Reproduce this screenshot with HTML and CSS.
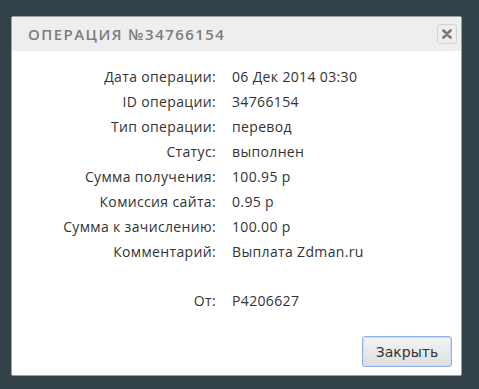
FILE: index.html
```html
<!DOCTYPE html>
<html>
<head>
<meta charset="utf-8">
<link rel="stylesheet" href="styles.css">
</head>
<body>
<div class="dialog">
  <div class="header">
    <span class="title">Операция №34766154</span>
    <button class="close" aria-label="close">
      <svg width="10" height="10" viewBox="0 0 10 10"><path d="M1.5 1.5 L8.5 8.5 M8.5 1.5 L1.5 8.5" stroke="#787878" stroke-width="2.6" stroke-linecap="round"/></svg>
    </button>
  </div>
  <div class="content">
    <div class="info">
      <div class="label">Дата операции:</div><div class="value">06 Дек 2014 03:30</div>
      <div class="label">ID операции:</div><div class="value">34766154</div>
      <div class="label">Тип операции:</div><div class="value">перевод</div>
      <div class="label">Статус:</div><div class="value">выполнен</div>
      <div class="label">Сумма получения:</div><div class="value">100.95 р</div>
      <div class="label">Комиссия сайта:</div><div class="value">0.95 р</div>
      <div class="label">Сумма к зачислению:</div><div class="value">100.00 р</div>
      <div class="label">Комментарий:</div><div class="value">Выплата Zdman.ru</div>
      <div class="label from">От:</div><div class="value from">P4206627</div>
    </div>
  </div>
  <div class="footer">
    <button class="btn">Закрыть</button>
  </div>
</div>
</body>
</html>
```
FILE: styles.css
```css
html, body {
  margin: 0;
  padding: 0;
  background: #334149;
}
body {
  padding: 16px 0 0 11px;
  height: 389px;
  box-sizing: border-box;
}
.dialog {
  width: 451px;
  height: 360px;
  box-sizing: border-box;
  background: #fff;
  border: 1px solid #9aa0a4;
  border-radius: 2px;
  display: flex;
  flex-direction: column;
}
.header {
  height: 34px;
  background: #eeeeee;
  display: flex;
  align-items: center;
  justify-content: space-between;
  padding: 0 4px 0 16px;
}
.title {
  font-family: "Open Sans", sans-serif;
  font-size: 15px;
  text-transform: uppercase;
  letter-spacing: 1.45px;
  color: #7d7d7d;
  font-weight: 600;
}
.close {
  width: 20px;
  height: 20px;
  padding: 0;
  border: 1px solid #d4d4d4;
  border-radius: 3px;
  background: #eeeeee;
  display: flex;
  align-items: center;
  justify-content: center;
}
.content {
  flex: 1;
  padding-top: 13px;
}
.info {
  display: grid;
  grid-template-columns: 204px auto;
  column-gap: 16px;
  font-family: "Open Sans", sans-serif;
  font-size: 14px;
  letter-spacing: 0.35px;
  line-height: 25px;
  color: #333;
}
.label {
  text-align: right;
}
.from {
  margin-top: 24px;
}
.footer {
  display: flex;
  justify-content: flex-end;
  padding: 0 9px 8px 0;
}
.btn {
  width: 90px;
  height: 31px;
  border: 1px solid #8db4e6;
  border-radius: 3px;
  background: linear-gradient(#f4f4f4, #dedede);
  box-shadow: 0 0 0 1px #c9dcf4 inset;
  font-family: "DejaVu Sans", sans-serif;
  font-size: 14px;
  color: #333;
  padding: 0;
}
```
